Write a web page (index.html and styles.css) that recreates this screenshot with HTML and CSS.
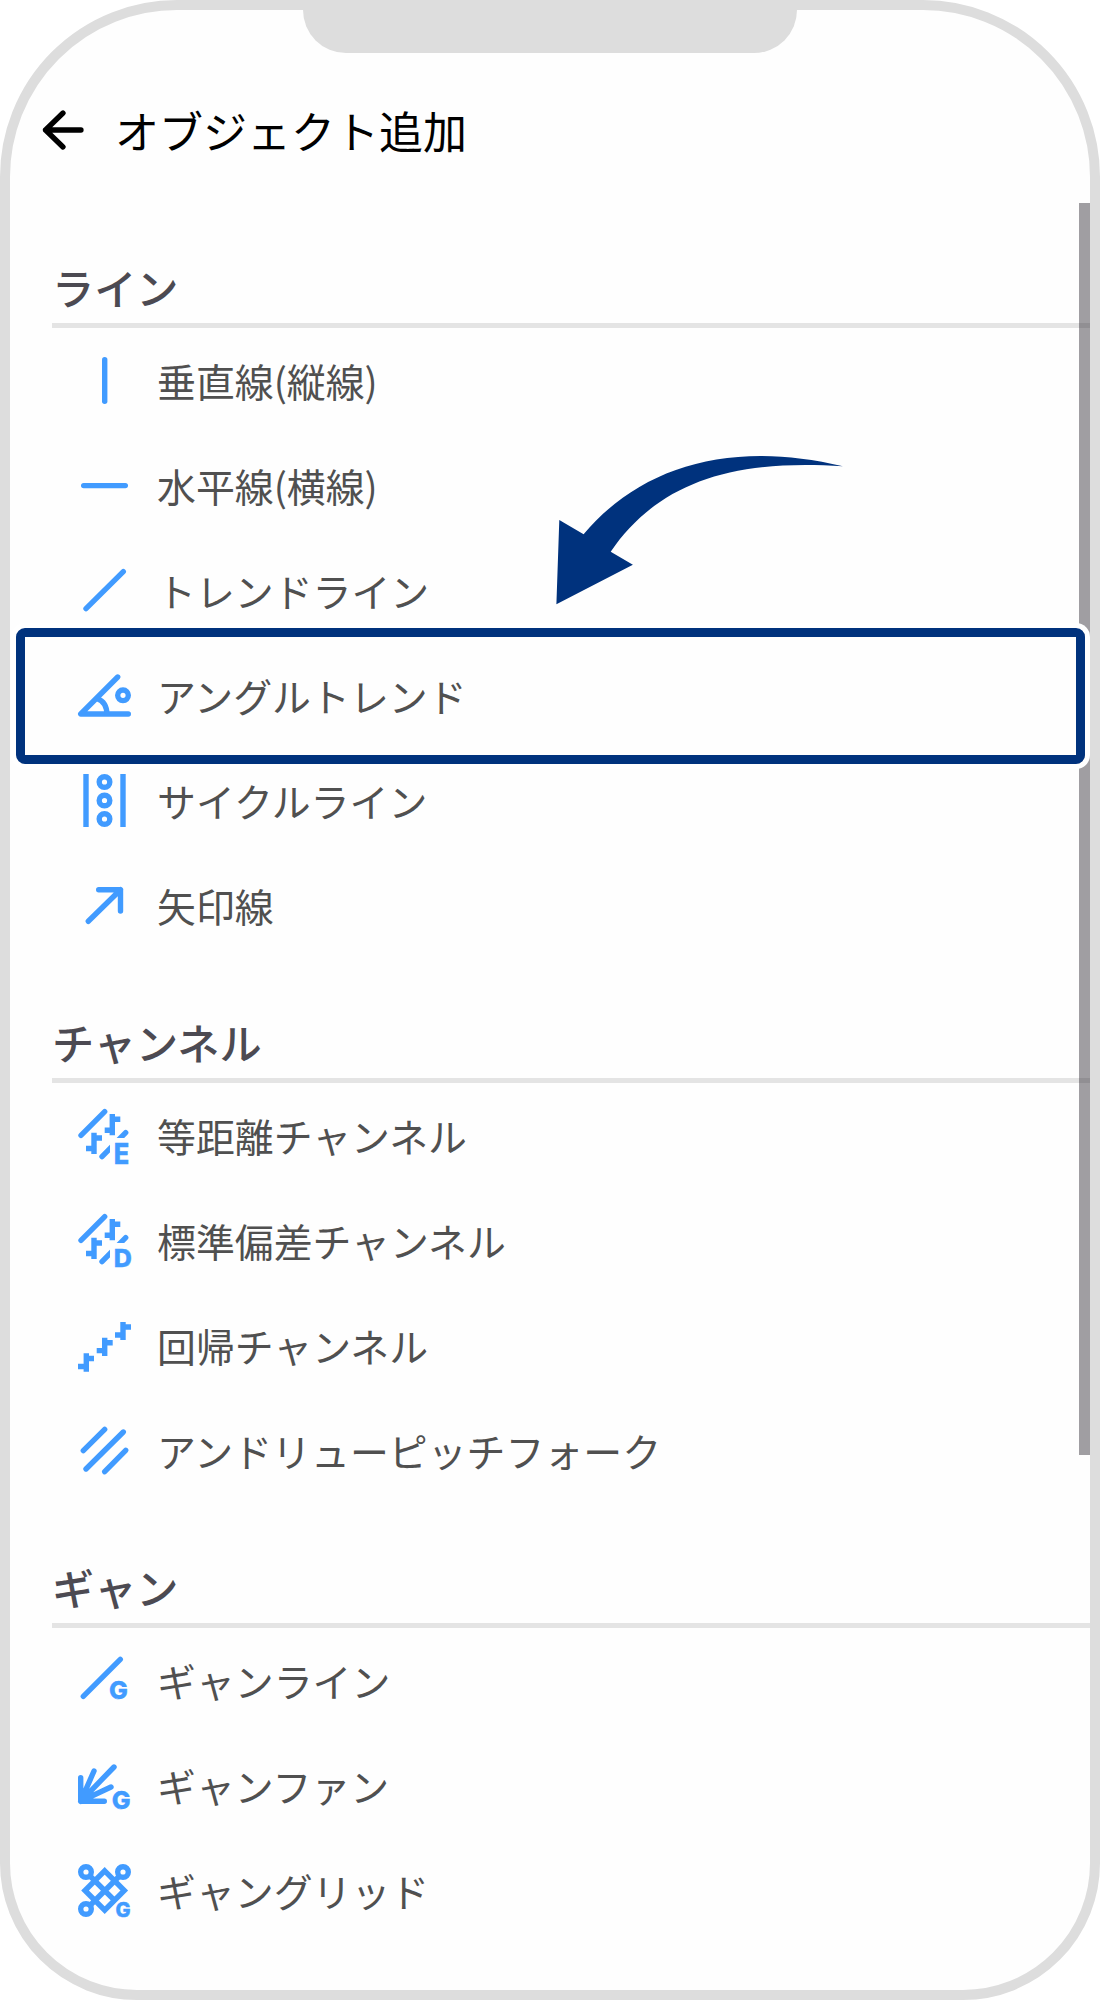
FILE: index.html
```html
<!DOCTYPE html>
<html lang="ja">
<head>
    <meta charset="UTF-8">
    <title>オブジェクト追加</title>
    <link rel="stylesheet" href="styles.css">
</head>
<body>
    <div class="phone">
        <div class="notch"></div>

        <header class="header">
            <svg class="back" viewBox="0 0 44 44">
                <path d="M22 5 L4.5 22 L22 39 M4.5 22 H40" />
            </svg>
            <h1>オブジェクト追加</h1>
        </header>

        <main class="content">
            <!-- ライン -->
            <section>
                <h2>ライン</h2>
                <ul>
                    <li class="item">
                        <svg class="icon" viewBox="0 0 60 61"><path d="M29.7 9.7V51.3" /></svg>
                        <span>垂直線(縦線)</span>
                    </li>
                    <li class="item">
                        <svg class="icon" viewBox="0 0 60 61"><path d="M8.7 30.6H50.3" /></svg>
                        <span>水平線(横線)</span>
                    </li>
                    <li class="item">
                        <svg class="icon" viewBox="0 0 60 61"><path d="M11 48.7L48.3 11.7" /></svg>
                        <span>トレンドライン</span>
                    </li>
                    <li class="item selected">
                        <svg class="icon" viewBox="0 0 60 61">
                            <path d="M42.7 12L5.7 49H53.3" />
                            <path class="flat" d="M22 33.5Q32 37 32 50" />
                            <circle cx="48" cy="30.3" r="5.3" />
                        </svg>
                        <span>アングルトレンド</span>
                    </li>
                    <li class="item">
                        <svg class="icon" viewBox="0 0 60 61">
                            <path class="flat" d="M11 4V57M48 4V57" />
                            <circle cx="29.5" cy="12" r="5.3" />
                            <circle cx="29.5" cy="30.5" r="5.3" />
                            <circle cx="29.5" cy="49" r="5.3" />
                        </svg>
                        <span>サイクルライン</span>
                    </li>
                    <li class="item">
                        <svg class="icon" viewBox="0 0 60 61"><path d="M13.3 46.3L45.5 14.7M23.7 14.7H45.5V36" /></svg>
                        <span>矢印線</span>
                    </li>
                </ul>
            </section>

            <!-- チャンネル -->
            <section>
                <h2>チャンネル</h2>
                <ul>
                    <li class="item">
                        <svg class="icon" viewBox="0 0 60 61">
                            <clipPath id="cut"><path d="M0 0H60V33H35V61H0Z" /></clipPath>
                            <path d="M6 30.3L29.7 6.7" />
                            <path class="flat" d="M37.3 9V30.3M37.3 14.3H45.3M29.7 25.2H37.3M19 27.7V49M19 33H27M11 43.5H19" />
                            <path d="M27 51.7L50.7 27.7" clip-path="url(#cut)" />
                            <text x="38.8" y="59" font-size="28" textLength="15.5" lengthAdjust="spacingAndGlyphs">E</text>
                        </svg>
                        <span>等距離チャンネル</span>
                    </li>
                    <li class="item">
                        <svg class="icon" viewBox="0 0 60 61">
                            <path d="M6 30.3L29.7 6.7" />
                            <path class="flat" d="M37.3 9V30.3M37.3 14.3H45.3M29.7 25.2H37.3M19 27.7V49M19 33H27M11 43.5H19" />
                            <path d="M27 51.7L50.7 27.7" clip-path="url(#cut)" />
                            <text x="38.8" y="57" font-size="25">D</text>
                        </svg>
                        <span>標準偏差チャンネル</span>
                    </li>
                    <li class="item">
                        <svg class="icon" viewBox="0 0 60 61">
                            <path class="flat" d="M11.3 38.3V56.7M11.3 43.5H19M3 51.5H11.3M29.7 22.7V41M29.7 27.8H37.7M21.7 35.6H29.7M48 7V25M48 12H56M40 20H48" />
                        </svg>
                        <span>回帰チャンネル</span>
                    </li>
                    <li class="item">
                        <svg class="icon" viewBox="0 0 60 61"><path d="M8.3 30.7L29.7 9.3M11 49L48.3 12M29.7 51.7L50.7 30.3" /></svg>
                        <span>アンドリューピッチフォーク</span>
                    </li>
                </ul>
            </section>

            <!-- ギャン -->
            <section>
                <h2>ギャン</h2>
                <ul>
                    <li class="item">
                        <svg class="icon" viewBox="0 0 60 61">
                            <path d="M8.3 46.3L45.3 9.3" />
                            <text x="34" y="48.6" font-size="25">G</text>
                        </svg>
                        <span>ギャンライン</span>
                    </li>
                    <li class="item">
                        <svg class="icon" viewBox="0 0 60 61">
                            <path d="M5.7 22.7V46.3H29.3M5.7 46.3L19 16M5.7 46.3L39 12M5.7 46.3L36 32" />
                            <text x="36.8" y="53.6" font-size="25">G</text>
                        </svg>
                        <span>ギャンファン</span>
                    </li>
                    <li class="item">
                        <svg class="icon" viewBox="0 0 60 61">
                            <path class="flat" d="M29.7 10.8L49.3 30.5L29.7 50.2L10 30.5ZM15 16L39.5 40.3M44.5 16L15 45.5" />
                            <circle cx="11" cy="12" r="5.3" />
                            <circle cx="48" cy="12" r="5.3" />
                            <circle cx="11" cy="49" r="5.3" />
                            <text x="40.4" y="56.6" font-size="20">G</text>
                        </svg>
                        <span>ギャングリッド</span>
                    </li>
                </ul>
            </section>
        </main>

        <div class="scrollbar"></div>

        <svg class="arrow" viewBox="0 0 300 160">
            <path d="M293 16.3C180 -11 90 17 33.6 84.3L9.3 70L6.4 154.3L82.9 114.7L60.7 101.7C105 37 175 8 293 16.3Z" />
        </svg>
    </div>
</body>
</html>
```
FILE: styles.css
```css
* {
    box-sizing: border-box;
    margin: 0;
    padding: 0;
}
body {
    background: #fff;
    font-family: "Noto Sans CJK JP", sans-serif;
}
.phone {
    position: relative;
    width: 1100px;
    height: 2000px;
    background: #fefefe;
    border: 10px solid #ddd;
    border-radius: 177px 177px 137px 137px;
    overflow: hidden;
}
.notch {
    width: 494px;
    height: 43px;
    margin: 0 auto;
    background: #ddd;
    border-radius: 0 0 43px 43px;
}
.header {
    display: flex;
    align-items: center;
    gap: 30px;
    height: 150px;
    padding: 4px 0 0 31px;
}
.back {
    width: 44px;
    height: 44px;
    margin-bottom: 1px;
    fill: none;
    stroke: #000;
    stroke-width: 5.3;
    stroke-linecap: round;
    stroke-linejoin: round;
}
h1 {
    font-size: 44px;
    font-weight: 400;
    line-height: 60px;
    color: #000;
}
.content {
    padding-left: 42px;
}
h2 {
    height: 125px;
    padding-top: 54px;
    border-bottom: 5px solid #e4e4e4;
    font-size: 42.2px;
    font-weight: 500;
    line-height: 60px;
    color: #4c4a52;
}
ul {
    list-style: none;
}
.item {
    position: relative;
    display: flex;
    align-items: center;
    gap: 22px;
    height: 105px;
    padding-left: 23px;
    font-size: 38.9px;
    line-height: 60px;
    color: #505050;
}
.item span {
    margin-bottom: 1px;
}
.icon {
    width: 60px;
    height: 61px;
    overflow: visible;
    fill: none;
    stroke: #419bff;
    stroke-width: 5.4;
    stroke-linecap: round;
    stroke-linejoin: round;
}
.icon .flat {
    stroke-linecap: butt;
    stroke-linejoin: miter;
}
.icon text {
    fill: #419bff;
    stroke-width: 0.4;
    stroke-linejoin: miter;
    font-family: Inter, sans-serif;
    font-weight: 800;
}
/* frame round the chosen row */
.selected::after {
    content: "";
    position: absolute;
    z-index: 2;
    top: -15px;
    left: -36px;
    box-sizing: border-box;
    width: 1069px;
    height: 136px;
    border: 9px solid #00327d;
    border-radius: 9px;
    box-shadow: 0 0 0 5px #fff;
}
.scrollbar {
    position: absolute;
    top: 193px;
    right: 0;
    width: 11px;
    height: 1252px;
    background: rgba(20, 14, 26, 0.4);
}
.arrow {
    position: absolute;
    top: 440px;
    left: 540px;
    width: 300px;
    height: 160px;
    fill: #00327d;
}
```
